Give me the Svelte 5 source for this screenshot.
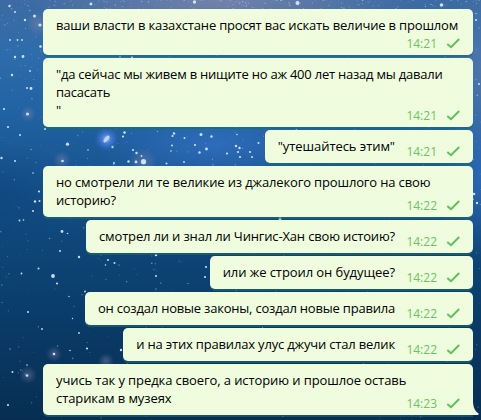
<script>
	const messages = [
		{ lines: ['ваши власти в казахстане просят вас искать величие в прошлом'], time: '14:21', wide: true, below: true, tracking: -0.175 },
		{ lines: ['"да сейчас мы живем в нищите но аж 400 лет назад мы давали', 'пасасать', '"'], time: '14:21', wide: true, tracking: -0.225 },
		{ lines: ['"утешайтесь этим"'], time: '14:21', tracking: -0.06 },
		{ lines: ['но смотрели ли те великие из джалекого прошлого на свою', 'историю?'], time: '14:22', wide: true, tracking: -0.145 },
		{ lines: ['смотрел ли и знал ли Чингис-Хан свою истоию?'], time: '14:22', tracking: -0.16 },
		{ lines: ['или же строил он будущее?'], time: '14:22', tracking: -0.08 },
		{ lines: ['он создал новые законы, создал новые правила'], time: '14:22', tracking: -0.205 },
		{ lines: ['и на этих правилах улус джучи стал велик'], time: '14:22', tracking: -0.18 },
		{ lines: ['учись так у предка своего, а историю и прошлое оставь', 'старикам в музеях'], time: '14:23', wide: true, tail: true, tracking: -0.095 }
	];

	// x, y, radius of the brighter stars
	const bright = [
		[143.5, 161.7, 2.6], [67.5, 144.2, 1.6], [40, 25, 1.6], [194.5, 2, 1.7], [297.5, 3, 2], [441.5, 5, 1.8],
		[15, 12, 1], [9.5, 6, 1.2], [25, 20, 1.2], [34.5, 16, 1.5], [40.5, 46.5, 1.3], [23, 56.5, 1.4], [15, 57, 1.2],
		[10, 40, 0.9], [17.5, 40, 0.9], [22, 40, 0.9], [12, 75, 1.2], [27, 88, 1], [31, 88.5, 1.4], [27.5, 114, 1.5],
		[4, 109, 1.1], [8, 127, 1.1], [20, 135, 1], [1.5, 158, 1.2], [15, 161, 1], [45, 129, 1], [91, 4, 1.4],
		[39, 191.5, 1.1], [35, 201.5, 1.2], [39.5, 201, 1], [33, 211, 1], [33, 173, 0.8], [30, 71, 0.9],
		[124.5, 132.5, 1.3], [123, 136.5, 1.1], [112.5, 147, 1.2], [133, 150, 1.1], [136.5, 153, 1.2], [141.5, 156, 0.9],
		[136, 162, 1.4], [128.5, 161.5, 1.2], [114, 163, 0.9], [88, 150, 0.8], [62.5, 161, 1.3],
		[174, 133.5, 1.2], [172.5, 136, 1.1], [184.5, 138, 1], [172, 145.5, 1], [171, 151, 0.8], [195, 145, 1.1],
		[199.5, 152.5, 1.2], [206.5, 149, 1.4], [201, 134.5, 1.5], [211.5, 136.5, 1.2], [236, 146, 1.2], [239.5, 148, 1.2],
		[238, 152, 1.1], [240, 157, 1.1], [250, 152, 1.1], [252, 157, 1], [227, 153.5, 1.1], [258.5, 143, 1],
		[237, 134.5, 0.8], [184, 162, 0.9], [166.5, 163.5, 1],
		[62, 231.5, 1.4], [67.5, 233.5, 0.8], [60, 251, 1], [79, 257, 1.2], [38.5, 268.5, 1], [21.5, 273.5, 0.9],
		[53, 276, 1.9], [57, 283.5, 1.1], [28, 312, 1], [42, 329, 0.9], [69, 296.5, 0.7], [72.5, 318.5, 0.7],
		[79, 333, 0.9], [87, 348.5, 1.1], [54, 354, 1.3], [70, 350.5, 0.8], [121, 350, 1.2], [27, 375.5, 1.3],
		[12.5, 372, 0.9], [27, 365, 0.8], [8, 405, 1.1], [85, 291.5, 0.9], [19.5, 220.5, 0.9], [23.5, 220, 0.8],
		[108, 260, 1], [114.5, 263, 1], [105.5, 265, 0.8], [156, 255, 1.3], [206, 267, 1.1], [156, 276, 1], [205, 277, 1.1],
		[280, 218.5, 1.5], [474, 194, 1.3], [477, 203, 1.2], [476, 20, 1.1], [479, 84, 1], [120, 56.5, 1], [132, 57, 1]
	];

	const nebulae = [[62, 160, 9], [28, 114, 8], [54, 354, 8], [28, 375, 9], [106, 361, 8], [143, 162, 14], [38, 24, 12]];

	let seed = 41;
	function rand() {
		seed = (seed * 16807) % 2147483647;
		return seed / 2147483647;
	}

	// denser towards the top of the sky
	const dust = Array.from({ length: 1100 }, () => ({
		x: rand() * 481,
		y: Math.pow(rand(), 1.8) * 420,
		r: 0.3 + rand() * 0.5,
		o: 0.2 + rand() * 0.55
	}));
</script>

<div class="chat">
	<svg class="sky" viewBox="0 0 481 420" width="481" height="420" aria-hidden="true">
		<defs>
			<linearGradient id="base" x1="0" y1="0" x2="0" y2="1">
				<stop offset="0" stop-color="#3d6ba3" />
				<stop offset="0.12" stop-color="#2f6cab" />
				<stop offset="0.26" stop-color="#2263a3" />
				<stop offset="0.4" stop-color="#195693" />
				<stop offset="0.55" stop-color="#0f487c" />
				<stop offset="0.75" stop-color="#0a3c69" />
				<stop offset="1" stop-color="#072e52" />
			</linearGradient>
			<radialGradient id="haze"><stop offset="0" stop-color="#8789ae" stop-opacity="0.75" /><stop offset="1" stop-color="#8789ae" stop-opacity="0" /></radialGradient>
			<radialGradient id="blue"><stop offset="0" stop-color="#3b76cf" stop-opacity="0.6" /><stop offset="1" stop-color="#3b76cf" stop-opacity="0" /></radialGradient>
			<radialGradient id="dark"><stop offset="0" stop-color="#0b4276" stop-opacity="0.5" /><stop offset="1" stop-color="#0b4276" stop-opacity="0" /></radialGradient>
			<radialGradient id="glow"><stop offset="0" stop-color="#bed6ff" stop-opacity="0.9" /><stop offset="0.35" stop-color="#5e8cf2" stop-opacity="0.7" /><stop offset="1" stop-color="#3970d8" stop-opacity="0" /></radialGradient>
		</defs>
		<rect width="481" height="420" fill="url(#base)" />
		<ellipse cx="220" cy="0" rx="190" ry="50" fill="url(#haze)" />
		<ellipse cx="490" cy="80" rx="55" ry="90" fill="url(#haze)" opacity="0.6" />
		<ellipse cx="215" cy="145" rx="120" ry="42" fill="url(#blue)" />
		<ellipse cx="485" cy="180" rx="50" ry="80" fill="url(#blue)" />
		<ellipse cx="0" cy="195" rx="80" ry="55" fill="url(#dark)" />
		{#each dust as d}
			<circle cx={d.x} cy={d.y} r={d.r} fill="#a9d2f2" opacity={d.o} />
		{/each}
		{#each nebulae as [x, y, r]}
			<circle cx={x} cy={y} {r} fill="url(#haze)" opacity="0.6" />
		{/each}
		{#each bright as [x, y, r]}
			<circle cx={x} cy={y} {r} fill="#d9efff" opacity="0.9" />
		{/each}
		<circle cx="106.5" cy="139" r="12" fill="url(#glow)" />
		<ellipse cx="106.5" cy="139" rx="1.8" ry="4.2" transform="rotate(38 106.5 139)" fill="#bdd4ff" />
	</svg>

	<div class="messages">
		{#each messages as m}
			<div class="bubble" class:wide={m.wide} class:below={m.below} class:last={m.tail}>
				<div class="text" style="letter-spacing: {m.tracking}px">
					{#each m.lines as line}
						<div>{line}</div>
					{/each}
				</div>
				<div class="meta">
					<span>{m.time}</span>
					<svg class="check" viewBox="0 0 14 11" width="14" height="11">
						<path d="M1.3 6 L5 9.2 L13.2 1" fill="none" stroke="#5dc15b" stroke-width="1.9" />
					</svg>
				</div>
				{#if m.tail}
					<svg class="tail" viewBox="0 0 7 13" width="7" height="13">
						<path d="M0 0 H1 C1.3 5.5 3 9 6.6 11.5 Q7 13 5.5 13 H0 Z" fill="#effdde" />
					</svg>
				{/if}
			</div>
		{/each}
	</div>
</div>

<style>
	:global(body) { margin: 0; overflow: hidden; }
	.chat {
		position: relative;
		width: 481px;
		height: 420px;
		overflow: hidden;
		font-family: "Open Sans", "Noto Sans", sans-serif;
		font-size: 13px;
		line-height: 18px;
	}
	.sky { position: absolute; inset: 0; }
	.messages {
		position: relative;
		display: flex;
		flex-direction: column;
		align-items: flex-end;
		gap: 3px;
		padding: 9px 8px 0 43px;
	}
	.bubble {
		position: relative;
		display: grid;
		grid-template-columns: minmax(0, 1fr);
		box-sizing: border-box;
		padding: 7px 13px 8px;
		background: #effdde;
		border-radius: 5px;
		box-shadow: 0 2px 0 rgba(29, 110, 98, 0.6);
		color: #000;
	}
	.bubble.wide { width: 430px; }
	.bubble.below { padding-bottom: 21px; }
	.bubble.last { border-bottom-right-radius: 0; }
	.text { grid-area: 1 / 1; padding-right: 65px; white-space: nowrap; }
	.wide .text { padding-right: 0; }
	.meta {
		grid-area: 1 / 1;
		place-self: end;
		display: flex;
		align-items: center;
		gap: 9px;
		height: 18px;
		margin-bottom: -6px;
		color: #6cc264;
		font-size: 12px;
	}
	.below .meta { margin-bottom: -19px; }
	.check { display: block; margin-bottom: 1px; }
	.tail { position: absolute; right: -6px; bottom: 0; }
</style>
